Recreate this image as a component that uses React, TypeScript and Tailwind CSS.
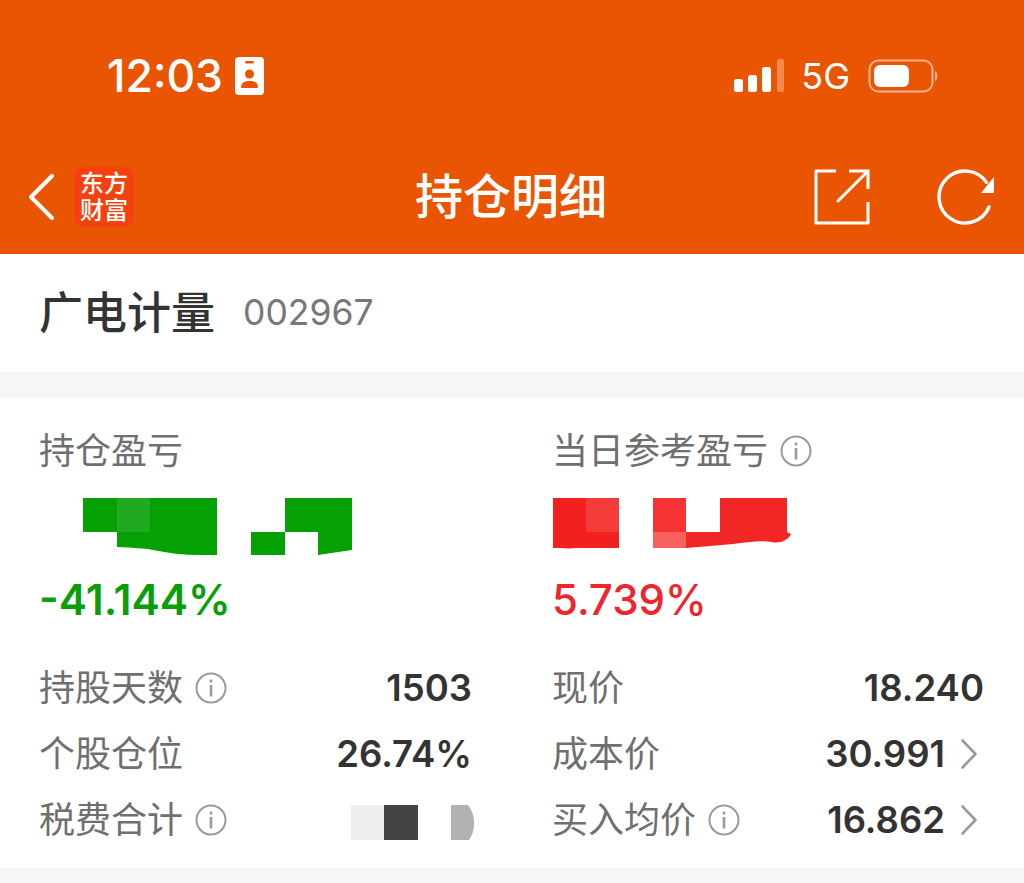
import React from 'react';

const FONT = 'font-["Inter","Noto_Sans_CJK_SC",sans-serif]';

const InfoIcon = () => (
  <svg width="32" height="32" viewBox="0 0 32 32" fill="none" className="shrink-0">
    <circle cx="16" cy="16" r="14.5" stroke="#9a9a9a" strokeWidth="2" />
    <rect x="14.7" y="7.5" width="2.6" height="3" fill="#9a9a9a" />
    <rect x="14.7" y="13" width="2.6" height="11.5" fill="#9a9a9a" />
  </svg>
);

const Chevron = () => (
  <svg width="18" height="30" viewBox="0 0 18 30" fill="none" className="ml-[15px] mr-[6px] shrink-0">
    <path d="M2.5 1.5L15.5 15L2.5 28.5" stroke="#9a9a9a" strokeWidth="2.6" strokeLinecap="round" strokeLinejoin="round" />
  </svg>
);

// the blurred-out amounts in the screenshot
const GreenMosaic = () => (
  <svg width="270" height="58" viewBox="0 0 270 58" className="ml-[44px] block">
    <path
      d="M0 0H134V57H117C100 57 85 55 70 52C60 50 50 50 34 49V34H0Z"
      fill="#04a004"
    />
    <rect x="34" y="0" width="33" height="34" fill="#1faa1f" />
    <path d="M202 0H269V52L235 57V34H202Z" fill="#04a004" />
    <rect x="168" y="34" width="34" height="23" fill="#04a004" />
  </svg>
);

const RedMosaic = () => (
  <svg width="240" height="58" viewBox="0 0 240 58" className="ml-[1px] block">
    <path d="M0 0H66V50H25C15 51 8 50 0 50Z" fill="#f32020" />
    <rect x="33" y="0" width="33" height="34" fill="#f53a3a" />
    <rect x="100" y="0" width="33" height="34" fill="#f53333" />
    <rect x="100" y="34" width="33" height="16" fill="#f96060" />
    <path
      d="M133 34H167V0H234V34L238 36C235 42 228 46 218 44C210 42 195 44 180 46C165 47 150 49 133 50Z"
      fill="#f32626"
    />
  </svg>
);

const GrayMosaic = () => (
  <svg width="124" height="36" viewBox="0 0 124 36" className="mr-[-3px] mt-[5px] block">
    <rect x="0" y="0" width="33" height="35" fill="#eeeeee" />
    <rect x="33" y="0" width="34" height="35" fill="#444444" />
    <path d="M100 0H117C125 10 125 25 118 35H100Z" fill="#b2b2b2" />
  </svg>
);

const Row = ({
  label,
  info,
  chevron,
  children,
}: {
  label: string;
  info?: boolean;
  chevron?: boolean;
  children: React.ReactNode;
}) => (
  <div className="flex h-[66px] items-center justify-between">
    <div className="flex items-center gap-[12px] text-[36px] text-[#6f6f6f]">
      <span>{label}</span>
      {info && <InfoIcon />}
    </div>
    <div className="flex items-center">
      {children}
      {chevron && <Chevron />}
    </div>
  </div>
);

const Value = ({ text }: { text: string }) => (
  <span className="text-[36.5px] font-semibold text-[#333333]">{text}</span>
);

export default function App() {
  return (
    <div className={`${FONT} flex h-[883px] flex-col overflow-hidden bg-[#f5f6f8]`}>
      {/* orange header */}
      <div className="bg-[#ea5504] text-white">
        <div className="flex h-[140px] items-start justify-between pl-[107px] pr-[84px] pt-[50px]">
          <div className="flex items-center gap-[12px]">
            <span className="text-[44.5px] leading-[52px] font-medium">12:03</span>
            <svg width="29" height="38" viewBox="0 0 29 38">
              <rect width="29" height="38" rx="4" fill="#fff" />
              <rect x="10" y="4" width="9" height="2.5" rx="1.2" fill="#ea5504" />
              <circle cx="14.5" cy="17" r="4.5" fill="#ea5504" />
              <path d="M6 31C6 25 10 24 14.5 24S23 25 23 31Z" fill="#ea5504" />
            </svg>
          </div>
          <div className="flex items-center pt-[4px]">
            <svg width="50" height="34" viewBox="0 0 50 34" fill="#fff">
              <rect x="0" y="20" width="9" height="13" rx="2.5" />
              <rect x="14" y="16" width="9" height="17" rx="2.5" />
              <rect x="28" y="8" width="9" height="25" rx="2.5" />
              <rect x="43" y="0" width="7" height="33" rx="2.5" fill="#f58a50" />
            </svg>
            <span className="ml-[17px] text-[36px] leading-[44px]">5G</span>
            <svg width="72" height="34" viewBox="0 0 72 34" className="ml-[18px]">
              <rect x="1.5" y="1.5" width="63" height="31" rx="9" fill="none" stroke="#f7b592" strokeWidth="2" />
              <rect x="6" y="6" width="35" height="22" rx="6" fill="#fff" />
              <path d="M67 12C70 13 70 21 67 22Z" fill="#f7b592" />
            </svg>
          </div>
        </div>
        <div className="flex h-[114px] items-center justify-between pl-[28px] pr-[30px]">
          <div className="flex w-[240px] items-center gap-[20px]">
            <svg width="26" height="46" viewBox="0 0 26 46" fill="none">
              <path d="M24 2L3 23L24 44" stroke="#fff" strokeWidth="4" strokeLinecap="round" strokeLinejoin="round" />
            </svg>
            <div className="flex h-[60px] w-[60px] flex-col items-center justify-center rounded-[10px] bg-[#f4410f] text-[24px] leading-[27px] font-medium">
              <span>东方</span>
              <span>财富</span>
            </div>
          </div>
          <span className="text-[48px] font-medium">持仓明细</span>
          <div className="flex w-[240px] items-center justify-end gap-[66px]">
            <svg width="56" height="56" viewBox="0 0 56 56" fill="none" stroke="#fff" strokeWidth="3">
              <path d="M22 2H2V54H54V33" strokeLinejoin="round" />
              <path d="M24 32L53 3" strokeLinecap="round" />
              <path d="M35 2H54V20" />
            </svg>
            <svg width="58" height="58" viewBox="0 0 58 58" fill="none">
              <path d="M50.5 14.4A26 26 0 1 0 53 39" stroke="#fff" strokeWidth="3.4" strokeLinecap="round" />
              <path d="M58 9V25H45Z" fill="#fff" />
            </svg>
          </div>
        </div>
      </div>

      {/* stock name */}
      <div className="flex h-[118px] items-center bg-white pl-[39px]">
        <span className="text-[44px] font-medium text-[#333333]">广电计量</span>
        <span className="ml-[28px] text-[35.5px] text-[#777777]">002967</span>
      </div>

      {/* position card */}
      <div className="mt-[26px] grid h-[470px] grid-cols-[433px_432px] gap-x-[80px] bg-white pl-[39px] pt-[31px]">
        <div>
          <div className="h-[44px] text-[36px] leading-[44px] text-[#6f6f6f]">持仓盈亏</div>
          <div className="mt-[25px]">
            <GreenMosaic />
          </div>
          <div className="mt-[20px] h-[48px] text-[42.5px] leading-[48px] font-semibold text-[#0a9f0a]">-41.144%</div>
          <div className="mt-[31px]">
            <Row label="持股天数" info>
              <Value text="1503" />
            </Row>
            <Row label="个股仓位">
              <Value text="26.74%" />
            </Row>
            <Row label="税费合计" info>
              <GrayMosaic />
            </Row>
          </div>
        </div>
        <div>
          <div className="flex h-[44px] items-center gap-[12px] text-[36px] text-[#6f6f6f]">
            <span>当日参考盈亏</span>
            <InfoIcon />
          </div>
          <div className="mt-[25px]">
            <RedMosaic />
          </div>
          <div className="mt-[20px] h-[48px] text-[42px] leading-[48px] font-medium text-[#f0252c]">5.739%</div>
          <div className="mt-[31px]">
            <Row label="现价">
              <Value text="18.240" />
            </Row>
            <Row label="成本价" chevron>
              <Value text="30.991" />
            </Row>
            <Row label="买入均价" info chevron>
              <Value text="16.862" />
            </Row>
          </div>
        </div>
      </div>
    </div>
  );
}
